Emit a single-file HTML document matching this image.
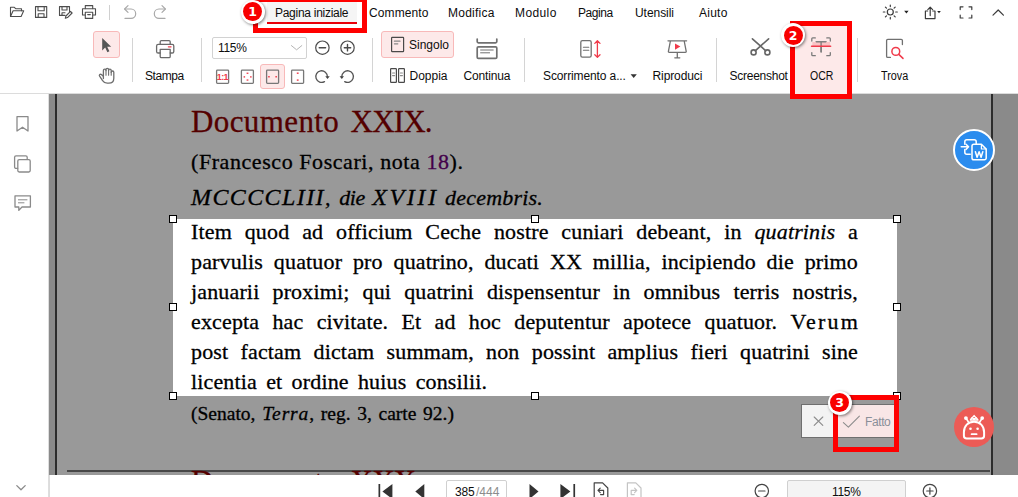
<!DOCTYPE html>
<html lang="it">
<head>
<meta charset="utf-8">
<title>OCR – Documento XXIX</title>
<style>
*{box-sizing:border-box;margin:0;padding:0}
html,body{width:1018px;height:497px;overflow:hidden;background:#fff}
body{position:relative;font-family:"Liberation Sans",sans-serif;font-size:12px;color:#1a1a1a}
.abs{position:absolute}
.t{position:absolute;white-space:nowrap;line-height:14px;height:14px;color:#0d0d0d}
.vd{position:absolute;width:1px;background:#d4d4d4;top:38px;height:44px}
.sel{position:absolute;background:#fde9e9;border:1px solid #f8b9b9;border-radius:3px}
#doc{position:absolute;left:49px;top:94px;width:969px;height:381px;background:#8a8a8a;overflow:hidden}
#page{position:absolute;left:6px;top:0;width:937px;height:381px;background:#999}
.s{position:absolute;white-space:nowrap;font-family:"Liberation Serif",serif;color:#000;left:136px;-webkit-text-stroke:0.3px currentColor}
.pl{width:667px;text-align:justify;text-align-last:justify;font-size:22px;line-height:30px;height:30px;letter-spacing:0.15px}
.h{font-size:31px;line-height:36px;color:#540000;letter-spacing:0.4px}
.hd{position:absolute;width:8px;height:8px;background:#fff;border:1px solid #000}
.rb{position:absolute;border:5px solid #f00}
.bd{position:absolute;width:24px;height:24px;border-radius:50%;background:#fff;box-shadow:1px 1px 3px rgba(0,0,0,.5)}
.bd b{position:absolute;left:2.5px;top:2.5px;width:19px;height:19px;border-radius:50%;background:#f80000;color:#fff;font:bold 12.5px/19px "DejaVu Sans","Liberation Sans",sans-serif;text-align:center}
svg{position:absolute;left:0;top:0;overflow:visible}
</style>
</head>
<body>

<!-- ======= TOP BAR ======= -->
<div class="abs" id="topbar" style="left:0;top:0;width:1018px;height:94px;background:#fff;border-bottom:1px solid #dcdcdc"></div>

<!-- menu tab highlight -->
<div class="abs" style="left:267px;top:2px;width:90px;height:20px;background:#f5f5f5"></div>
<div class="abs" style="left:267px;top:22px;width:90px;height:2px;background:#e8000a"></div>

<span class="t" style="left:275px;top:6px;letter-spacing:-0.28px">Pagina iniziale</span>
<span class="t" style="left:369px;top:6px;letter-spacing:0.1px">Commento</span>
<span class="t" style="left:448px;top:6px;letter-spacing:0.25px">Modifica</span>
<span class="t" style="left:515px;top:6px;letter-spacing:0.4px">Modulo</span>
<span class="t" style="left:578px;top:6px;letter-spacing:-0.45px">Pagina</span>
<span class="t" style="left:635px;top:6px;letter-spacing:-0.05px">Utensili</span>
<span class="t" style="left:699px;top:6px;letter-spacing:0.25px">Aiuto</span>

<!-- ribbon selections -->
<div class="sel" style="left:93px;top:31px;width:27px;height:27px"></div>
<div class="sel" style="left:260px;top:64px;width:25px;height:25px"></div>
<div class="sel" style="left:381px;top:31px;width:73px;height:27px"></div>
<div class="abs" style="left:795px;top:26px;width:52px;height:68px;background:#fde9e9"></div>

<div class="vd" style="left:132px"></div>
<div class="vd" style="left:201px"></div>
<div class="vd" style="left:372px"></div>
<div class="vd" style="left:524px"></div>
<div class="vd" style="left:716px"></div>
<div class="vd" style="left:857px"></div>
<div class="abs" style="left:109px;top:5px;width:1px;height:15px;background:#d0d0d0"></div>

<!-- zoom dropdown -->
<div class="abs" style="left:212px;top:37px;width:95px;height:22px;border:1px solid #d2d2d2;border-radius:2px;background:#fff"></div>
<span class="t" style="left:218px;top:41px;letter-spacing:-0.3px">115%</span>

<!-- ribbon labels -->
<span class="t" style="left:145px;top:69px;letter-spacing:-0.45px">Stampa</span>
<span class="t" style="left:409px;top:38px">Singolo</span>
<span class="t" style="left:409.5px;top:69px">Doppia</span>
<span class="t" style="left:463.5px;top:69px;letter-spacing:-0.15px">Continua</span>
<span class="t" style="left:543px;top:69px;letter-spacing:-0.12px">Scorrimento a...</span>
<span class="t" style="left:652.5px;top:69px;letter-spacing:-0.1px">Riproduci</span>
<span class="t" style="left:729.5px;top:69px;letter-spacing:-0.25px">Screenshot</span>
<span class="t" style="left:809.5px;top:69px;transform:scaleX(.875);transform-origin:0 50%">OCR</span>
<span class="t" style="left:881px;top:69px;transform:scaleX(.9);transform-origin:0 50%">Trova</span>

<!-- ======= LEFT SIDEBAR ======= -->
<div class="abs" style="left:0;top:94px;width:49px;height:403px;background:#fff;border-right:1px solid #dedede"></div>

<!-- ======= DOCUMENT ======= -->
<div id="doc">
  <div id="page">
    <div class="abs" style="left:0;top:0;width:2px;height:381px;background:#2c2c2c"></div>
    <div class="abs" style="left:936px;top:0;width:2px;height:381px;background:#2c2c2c"></div>
    <div class="abs" style="left:118px;top:125px;width:724px;height:177px;background:#fff"></div>

    <div class="s h" style="top:9.5px">Documento <span style="letter-spacing:-0.8px;margin-left:3.2px">XXIX.</span></div>
    <div class="s" style="top:54.8px;font-size:22px;line-height:26px;letter-spacing:0.57px">(Francesco Foscari, nota <span style="color:#43004a">18</span>).</div>
    <div class="s" style="top:89.7px;font-size:22px;line-height:26px;font-style:italic;word-spacing:2px"><span style="font-size:24px;letter-spacing:1.4px">MCCCCLIII</span><span style="letter-spacing:1.4px">,</span> <span style="letter-spacing:-0.5px">die</span> <span style="font-size:24px;letter-spacing:2.6px">XVIII</span> <span style="letter-spacing:0.2px;margin-left:-1px">decembris.</span></div>

    <div class="s pl" style="top:122.7px">Item quod ad officium Ceche nostre cuniari debeant, in <i>quatrinis</i> a</div>
    <div class="s pl" style="top:152.7px">parvulis quatuor pro quatrino, ducati XX millia, incipiendo die primo</div>
    <div class="s pl" style="top:182.7px">januarii proximi; qui quatrini dispensentur in omnibus terris nostris,</div>
    <div class="s pl" style="top:212.7px">excepta hac civitate. Et ad hoc deputentur apotece quatuor. <span style="letter-spacing:2.2px">Veru</span>m</div>
    <div class="s pl" style="top:242.7px">post factam dictam summam, non possint amplius fieri quatrini sine</div>
    <div class="s" style="top:272.7px;font-size:22px;line-height:30px;letter-spacing:0.15px;word-spacing:3.6px">licentia et ordine huius consilii.</div>

    <div class="s" style="top:308px;font-size:19.5px;line-height:24px;word-spacing:1.8px">(Senato, <i style="letter-spacing:0.9px">Terra</i>, reg. 3, carte 92.)</div>

    <div class="abs" style="left:12px;top:376px;width:923px;height:2px;background:#484848"></div>
    <div class="s h" style="top:369.6px">Documento <span style="letter-spacing:-0.8px;margin-left:3.2px">XXX.</span></div>

    <!-- Done / cancel -->
    <div class="abs" style="left:746px;top:310px;width:94px;height:34px;border:1px solid #6f6f6f;background:#f3f3f3"></div>
    <div class="abs" style="left:780px;top:311px;width:59px;height:32px;background:#f9e6e6"></div>
    <span class="t" style="left:810px;top:321px;color:#8a8f99;letter-spacing:-0.4px">Fatto</span>

    <!-- handles -->
    <div class="hd" style="left:114px;top:121px"></div>
    <div class="hd" style="left:476px;top:121px"></div>
    <div class="hd" style="left:838px;top:121px"></div>
    <div class="hd" style="left:114px;top:209px"></div>
    <div class="hd" style="left:838px;top:209px"></div>
    <div class="hd" style="left:114px;top:298px"></div>
    <div class="hd" style="left:476px;top:298px"></div>
    <div class="hd" style="left:838px;top:298px"></div>
  </div>
</div>

<!-- floating buttons -->
<div class="abs" style="left:953px;top:129px;width:42px;height:42px;border-radius:50%;background:#2b8cee;border:2px solid #fff"></div>
<div class="abs" style="left:954px;top:407px;width:40px;height:40px;border-radius:50%;background:#ec5b56"></div>

<!-- ======= BOTTOM BAR ======= -->
<div class="abs" style="left:49px;top:475px;width:969px;height:22px;background:#fff;border-left:1px solid #dcdcdc"></div>
<div class="abs" style="left:446px;top:480px;width:61px;height:22px;border:1px solid #d0d0d0;border-radius:2px;background:#fff"></div>
<span class="t" style="left:455px;top:485px;letter-spacing:-0.2px">385</span>
<span class="t" style="left:476px;top:485px;color:#8c8c8c">/444</span>
<div class="abs" style="left:787px;top:480px;width:119px;height:22px;border:1px solid #d0d0d0;border-radius:2px;background:#f4f4f4"></div>
<span class="t" style="left:832px;top:485px;letter-spacing:-0.3px">115%</span>

<!-- ======= RED ANNOTATIONS ======= -->
<div class="rb" style="left:253px;top:-3px;width:114px;height:36px"></div>
<div class="rb" style="left:790px;top:21px;width:62px;height:78px"></div>
<div class="rb" style="left:833px;top:395px;width:66px;height:57px"></div>
<div class="bd" style="left:240.5px;top:-0.5px"><b>1</b></div>
<div class="bd" style="left:781px;top:23px"><b>2</b></div>
<div class="bd" style="left:827.5px;top:390.5px"><b>3</b></div>

<!-- ======= ICONS ======= -->
<svg id="icons" width="1018" height="497" viewBox="0 0 1018 497" fill="none" stroke="#4a4a4a" stroke-width="1.2" stroke-linecap="round" stroke-linejoin="round">
<!-- quick access -->
<g stroke="#4d4d4d" stroke-width="1.1">
  <path d="M10.5 16.5V7.3h3.8l1.4 1.4h5.8v2.1"/>
  <path d="M10.5 16.5l2.6-5.7h10.6l-2.6 5.7z"/>
  <path d="M35.5 6.6h11.2v10.8H35.5z"/>
  <path d="M38 6.6v4.2h6.2V6.6"/>
  <path d="M38.2 17.4v-3.6h5.8v3.6"/>
  <path d="M65 15.4h-5.5V6.6h10v5"/>
  <path d="M62 6.6v3.4h5V6.6"/>
  <path d="M62 15.4v-2.6h3"/>
  <path d="M65.3 18.3l0.6-2.3 4.6-4.6 1.6 1.6-4.6 4.6z"/>
  <path d="M85.3 8.6V5.6h7.4v3"/>
  <path d="M85.3 15h-2.8V8.8h13V15h-2.8"/>
  <path d="M85.3 12.2h7.4v6.2h-7.4z"/>
  <path d="M87.8 14.6h2.4" stroke-width="1.4"/>
</g>
<g stroke="#a9a9a9" stroke-width="1.2">
  <path d="M128 5.6l-3.4 3.4 3.4 3.4"/>
  <path d="M124.8 9h6.2a4.7 4.7 0 0 1 0 9.4h-6"/>
  <path d="M162 5.6l3.4 3.4-3.4 3.4"/>
  <path d="M165.2 9H159a4.7 4.7 0 0 0 0 9.4h6"/>
</g>
<!-- top-right -->
<g stroke="#3c3c3c" stroke-width="1.2">
  <circle cx="890.3" cy="12" r="3"/>
  <path d="M890.3 5v1.6M890.3 17.4V19M883.3 12h1.6M895.7 12h1.6M885.4 7.1l1.1 1.1M894.1 15.8l1.1 1.1M895.2 7.1l-1.1 1.1M886.5 15.8l-1.1 1.1"/>
  <path d="M927.6 11h-2.2v7.6h9.6V11h-2.2"/>
  <path d="M930.2 15.6V7.6M927.8 9.6l2.4-2.4 2.4 2.4"/>
  <path d="M960.2 9.6V6.8h2.8M969 6.8h2.8v2.8M971.8 15.2v2.8H969M963 18h-2.8v-2.8"/>
  <path d="M993 15.2l5.2-5.2 5.2 5.2"/>
</g>
<path d="M904.2 10.8h4.4l-2.2 2.6z" fill="#222" stroke="none"/>
<path d="M937.2 11h3.6l-1.8 2.2z" fill="#222" stroke="none"/>

<!-- ribbon: cursor + hand -->
<path d="M102.2 38v12.4l3-2.8 2.2 4.6 2-0.9-2.2-4.5h4z" fill="#555" stroke="none"/>
<g stroke="#6e6e6e" stroke-width="1.3">
  <path d="M103.400 78.600V70.500a1.300 1.300 0 0 1 2.600 0V69.700a1.300 1.300 0 0 1 2.600 0V70.500a1.300 1.300 0 0 1 2.600 0V72.300a1.300 1.300 0 0 1 2.600 0V78.200c0 3-2 5-5 5h-1.600c-2 0-3.400-0.800-4.600-2.600l-3-4.400c-0.900-1.300 0.700-2.600 1.800-1.600l2 1.900"/>
  <path d="M106 70.500v4.700M108.600 70.500v4.700M111.200 72.300v2.900" stroke-width="1.100"/>
</g>
<!-- printer big -->
<g stroke="#6a6a6a" stroke-width="1.3">
  <path d="M160.2 44.4v-2.6c0-0.7 0.5-1.2 1.2-1.2h7.6c0.7 0 1.2 0.5 1.2 1.2v2.6"/>
  <path d="M160.2 53h-2c-1 0-1.6-0.6-1.6-1.6v-5.4c0-1 0.6-1.6 1.6-1.6h14c1 0 1.6 0.6 1.6 1.6v5.4c0 1-0.6 1.6-1.6 1.6h-2"/>
  <path d="M160.2 49.4h10v7c0 0.7-0.5 1.2-1.2 1.2h-7.6c-0.7 0-1.2-0.5-1.2-1.2z"/>
</g>
<path d="M168.4 46.8h2.6" stroke="#f03a4a" stroke-width="1.3"/>
<!-- dropdown chevron -->
<path d="M291.4 45.6l5.2 4.2 5.2-4.2" stroke="#b5b5b5" stroke-width="1"/>
<!-- zoom circles -->
<g stroke="#4a4a4a" stroke-width="1.2">
  <circle cx="322.4" cy="47.7" r="6.7"/>
  <path d="M319.2 47.7h6.4" stroke-width="1.4"/>
  <circle cx="347.5" cy="47.7" r="6.7"/>
  <path d="M344.3 47.7h6.4M347.5 44.5v6.4" stroke-width="1.4"/>
</g>
<!-- fit icons -->
<g stroke="#777" stroke-width="1.3">
  <rect x="216.6" y="70.2" width="12" height="13.2" rx="0.8"/>
  <rect x="241.4" y="70.2" width="12" height="13.2" rx="0.8"/>
  <rect x="266.6" y="70.2" width="12" height="13.2" rx="0.8"/>
  <rect x="291.6" y="70.2" width="12" height="13.2" rx="0.8"/>
</g>
<g fill="#f03a4a" stroke="none">
  <rect x="243.600" y="76.2" width="1.5" height="1.4"/><rect x="250.100" y="76.2" width="1.5" height="1.4"/>
  <rect x="246.600" y="72.600" width="1.800" height="1.300"/><rect x="246.600" y="79.400" width="1.800" height="1.300"/>
  <rect x="268.200" y="76" width="1.5" height="1.5"/><rect x="275.400" y="76" width="1.5" height="1.5"/>
  <rect x="296.800" y="72.500" width="1.800" height="1.400"/><rect x="296.800" y="79.400" width="1.800" height="1.400"/>
</g>
<!-- rotate -->
<g stroke="#555" stroke-width="1.3">
  <path d="M327.4 76.6A5.8 5.800 0 1 0 324.5 81.600"/>
  <path d="M341.800 76.6A5.800 5.800 0 1 1 344.700 81.600"/>
</g>
<path d="M325.300 76.2h4.400l-2.200 2.900z" fill="#444" stroke="none"/>
<path d="M339.600 76.2h4.400l-2.200 2.900z" fill="#444" stroke="none"/>
<text x="222.300" y="80.300" font-family="Liberation Sans, sans-serif" font-size="9" font-weight="bold" fill="#f03a4a" stroke="none" text-anchor="middle" letter-spacing="-0.700">1:1</text>
<!-- Singolo / Doppia -->
<g stroke="#4a4a4a" stroke-width="1.2">
  <rect x="391.6" y="37.4" width="12" height="14.2" rx="0.6"/>
  <rect x="390.6" y="68.6" width="5.8" height="13.8" rx="0.6"/>
  <rect x="398.6" y="68.6" width="5.8" height="13.8" rx="0.6"/>
</g>
<g stroke="#888" stroke-width="1.2">
  <path d="M394.4 41.2h5.6M394.4 43.8h3.4"/>
  <path d="M392.6 73h2M392.6 75.6h2M400.4 73h2M400.4 75.6h2"/>
</g>
<!-- Continua -->
<g stroke="#707070" stroke-width="1.7">
  <path d="M477.2 39v2.6c0 0.8 0.4 1.2 1.2 1.2h17.2c0.8 0 1.2-0.4 1.2-1.2V39"/>
  <rect x="477.2" y="46.8" width="19.6" height="11.6" rx="1.2"/>
  <path d="M480.6 50h12.6M480.6 52.8h9" stroke-width="1"/>
</g>
<!-- Scorrimento -->
<g stroke="#707070" stroke-width="1.3">
  <rect x="580.8" y="40.6" width="10.4" height="16.6" rx="1.6"/>
  <path d="M583.4 47.2h5.4M583.4 50.2h5.4" stroke-width="1.1"/>
</g>
<g stroke="#f03a4a" stroke-width="1.3">
  <path d="M597.4 41v16.2M594.8 43.4l2.6-2.6 2.6 2.6M594.8 54.8l2.6 2.6 2.6-2.6"/>
</g>
<!-- Riproduci -->
<g stroke="#707070" stroke-width="1.3">
  <path d="M668 40.8h18.6M670.4 41l-2 10.4c-0.1 0.7 0.2 1 0.9 1h16c0.7 0 1-0.3 0.9-1l-2-10.4M677.3 52.6v5M674.8 57.8h5"/>
</g>
<path d="M675 43.4l5.4 3.2-5.4 3.2z" fill="#f03a4a" stroke="none"/>
<!-- Scissors -->
<g stroke="#666" stroke-width="1.600">
  <path d="M752.4 38.800l13.4 12M768.600 38.800l-13.400 12"/>
  <circle cx="753.600" cy="52.400" r="2.500"/>
  <circle cx="767.400" cy="52.400" r="2.500"/>
</g>
<!-- OCR -->
<g stroke="#7a7a7a" stroke-width="1.3">
  <path d="M811.8 41v-2.2c0-0.6 0.3-0.9 0.9-0.9h2.6M826.8 37.9h2.6c0.6 0 0.9 0.3 0.9 0.9V41M830.3 52.6v2.2c0 0.6-0.3 0.9-0.9 0.9h-2.6M815.3 55.700h-2.6c-0.6 0-0.9-0.3-0.9-0.9v-2.200"/>
  <path d="M816 42h10.200M821.1 42v10"/>
</g>
<rect x="812.400" y="42" width="17.600" height="4" fill="#f9c4c6" stroke="none"/>
<path d="M816.400 41.800h9.400M821.100 41.800v10" stroke="#7a7a7a" stroke-width="1.300"/>
<path d="M811.600 46.200h19" stroke="#f03a4a" stroke-width="1.600"/>
<!-- Trova -->
<g stroke="#707070" stroke-width="1.3">
  <path d="M902.400 44.6v-4c0-0.800-0.400-1.200-1.200-1.200h-13.400c-0.800 0-1.200 0.400-1.200 1.200v15.600c0 0.800 0.400 1.200 1.200 1.200h2.600"/>
</g>
<g stroke="#f03a4a" stroke-width="1.5">
  <circle cx="895.800" cy="51.400" r="3.900"/>
  <path d="M898.800 54.400l4.200 4"/>
</g>
<!-- scorrimento arrow -->
<path d="M630.6 74.200h6.200l-3.100 3.800z" fill="#333" stroke="none"/>

<!-- sidebar -->
<g stroke="#8a8a8a" stroke-width="1.3">
  <path d="M17 116.600h11v14.400l-5.500-3.800-5.500 3.800z"/>
  <rect x="17.800" y="159.600" width="12.400" height="12.400" rx="1.400"/>
  <path d="M14.600 167v-9.800a1.400 1.400 0 0 1 1.400-1.400h9.800a1.400 1.400 0 0 1 1.400 1.400v2.200M14.600 167a1.400 1.400 0 0 0 1.400 1.400h1.600"/>
  <path d="M15 195.800h15.400v11.200h-8.400l-3.200 3.400v-3.400h-3.800z"/>
  <path d="M18.400 199.800h8.600M18.400 202.800h5.600" stroke-width="1"/>
  <path d="M16.800 485.600l4.200 4.200 4.200-4.200"/>
</g>

<!-- bottom nav -->
<g fill="#333" stroke="none">
  <path d="M378.500 484h1.700v15h-1.700zM392.400 484v15l-10-7.500z"/>
  <path d="M424.300 484v15l-9-7.500z"/>
  <path d="M529.500 484v15l9-7.500z"/>
  <path d="M560.400 484v15l10-7.500zM573.400 484h1.700v15h-1.700z"/>
</g>
<g stroke="#444" stroke-width="1.2">
  <path d="M594.200 499v-16.200h8.400l5.200 5.200v11"/>
  <path d="M603.600 490.400h-5.400M600.200 488.200l-2.200 2.200 2.200 2.200M603.600 490.400v4.200h-3"/>
  <circle cx="761.800" cy="491" r="6.700"/>
  <path d="M758.600 491h6.400"/>
  <circle cx="929.900" cy="491" r="6.700"/>
  <path d="M926.700 491h6.400M929.900 487.800v6.400"/>
</g>
<g stroke="#c4c4c4" stroke-width="1.2">
  <path d="M627.400 499v-16.200h8.400l5.200 5.200v11"/>
  <path d="M631.200 490.400h5.400M634.600 488.200l2.200 2.200-2.200 2.200M631.200 490.400v4.200h3"/>
</g>

<!-- Fatto buttons -->
<g stroke="#8c8c8c" stroke-width="1.1">
  <path d="M814.200 417l8.600 8.400M822.800 417l-8.600 8.400"/>
  <path d="M843.400 422.600l5 4.600 11-11"/>
</g>

<!-- floating icons -->
<g stroke="#fff" stroke-width="1.500">
  <path d="M964.800 144.200v-2.400a2 2 0 0 1 2-2h7.400a2 2 0 0 1 2 2v1.600M964.800 149.600v2.600a2 2 0 0 0 2 2h3.400"/>
  <path d="M961.200 146.800h7.200M966 144.200l2.600 2.600-2.600 2.600"/>
  <path d="M973.800 144.300h7.600l4.800 4.800v8.800a1.800 1.800 0 0 1-1.800 1.800h-10.600a1.800 1.800 0 0 1-1.800-1.800v-11.800a1.800 1.800 0 0 1 1.800-1.800z"/>
  <path d="M981.400 144.600v4.400h4.600" stroke-width="1.200"/>
  <path d="M975.400 151.800l1.700 5.400 2-5.400 2 5.400 1.700-5.400" stroke-width="1.500"/>
</g>
<g stroke="#fff" stroke-width="2">
  <path d="M963.900 433.400v-1.200c0-6.400 4.200-10.400 10.100-10.400s10.100 4 10.100 10.400v3.600c0 1.800-1 2.800-2.800 2.800h-14.600c-1.800 0-2.800-1-2.800-2.800z"/>
  <path d="M966.400 418.800l2.200 3.400M981.800 418.800l-2.200 3.400" stroke-width="1.600"/>
  <path d="M970.600 419.400l1.400-1.600 2.100 1 2.100-1 1.400 1.600M970.400 420h7.600" stroke-width="1.400"/>
  <path d="M972.300 417.600l1.800-2 1.800 2" stroke-width="1.400"/>
  <circle cx="965.900" cy="418.100" r="1.900" fill="#fff" stroke="none"/>
  <circle cx="982.200" cy="418.100" r="1.900" fill="#fff" stroke="none"/>
  <circle cx="970.500" cy="428.800" r="1.300" fill="#fff" stroke="none"/>
  <circle cx="977.600" cy="428.800" r="1.300" fill="#fff" stroke="none"/>
  <path d="M971.600 434.200h5" stroke-width="1.800"/>
</g>
</svg>

</body>
</html>
